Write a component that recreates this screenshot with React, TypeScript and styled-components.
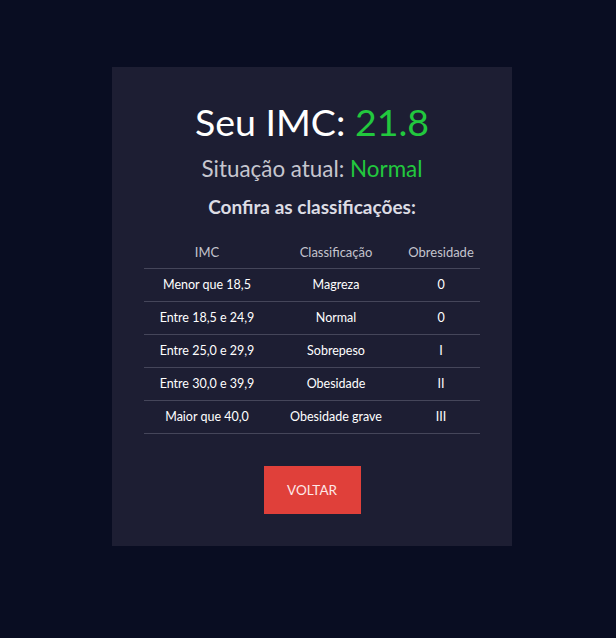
import React from "react";
import styled, { createGlobalStyle } from "styled-components";

const Global = createGlobalStyle`
  html, body { margin: 0; padding: 0; background: #090d22; }
  body { font-family: Lato, "Open Sans", sans-serif; }
`;

const Page = styled.div`
  min-height: 638px;
  display: flex;
  justify-content: center;
  align-items: flex-start;
  padding: 67px 0 0 8px;
  box-sizing: border-box;
`;

const Card = styled.div`
  width: 400px;
  background: #1d1e33;
  box-sizing: border-box;
  padding: 33px 32px 32px;
  display: flex;
  flex-direction: column;
  align-items: center;
`;

const Title = styled.h1`
  margin: 0;
  font-size: 37.5px;
  font-weight: 400;
  color: #ffffff;
  line-height: 44px;
`;

const Accent = styled.span`
  color: #22c83e;
`;

const Subtitle = styled.h2`
  margin: 11.5px 0 0;
  font-size: 22.4px;
  font-weight: 400;
  color: #c6c6cf;
  line-height: 26px;
`;

const Heading = styled.h3`
  margin: 14px 0 0;
  font-size: 19px;
  font-weight: 700;
  color: #dcdce4;
  line-height: 22px;
`;

const Table = styled.div`
  margin-top: 18px;
  width: 336px;
  display: grid;
  grid-template-columns: 126px 132px 78px;
`;

const Cell = styled.div<{ $head?: boolean }>`
  height: 32px;
  display: flex;
  align-items: center;
  justify-content: center;
  font-size: ${(p) => (p.$head ? "13px" : "12.5px")};
  font-weight: 400;
  color: ${(p) => (p.$head ? "#c4c4ce" : "#ffffff")};
  border-bottom: 1px solid #45465a;
  white-space: nowrap;
`;

const Button = styled.button`
  margin-top: 32px;
  width: 97px;
  height: 48px;
  border: none;
  background: #e0403a;
  color: #fde8e8;
  font-family: Lato, sans-serif;
  font-size: 13.5px;
  cursor: pointer;
`;

const rows = [
  ["Menor que 18,5", "Magreza", "0"],
  ["Entre 18,5 e 24,9", "Normal", "0"],
  ["Entre 25,0 e 29,9", "Sobrepeso", "I"],
  ["Entre 30,0 e 39,9", "Obesidade", "II"],
  ["Maior que 40,0", "Obesidade grave", "III"],
];

export default function App() {
  return (
    <>
      <Global />
      <Page>
        <Card>
          <Title>
            Seu IMC: <Accent>21.8</Accent>
          </Title>
          <Subtitle>
            Situação atual: <Accent>Normal</Accent>
          </Subtitle>
          <Heading>Confira as classificações:</Heading>
          <Table>
            <Cell $head>IMC</Cell>
            <Cell $head>Classificação</Cell>
            <Cell $head>Obresidade</Cell>
            {rows.map((r) =>
              r.map((c, i) => <Cell key={r[0] + i}>{c}</Cell>)
            )}
          </Table>
          <Button>VOLTAR</Button>
        </Card>
      </Page>
    </>
  );
}
